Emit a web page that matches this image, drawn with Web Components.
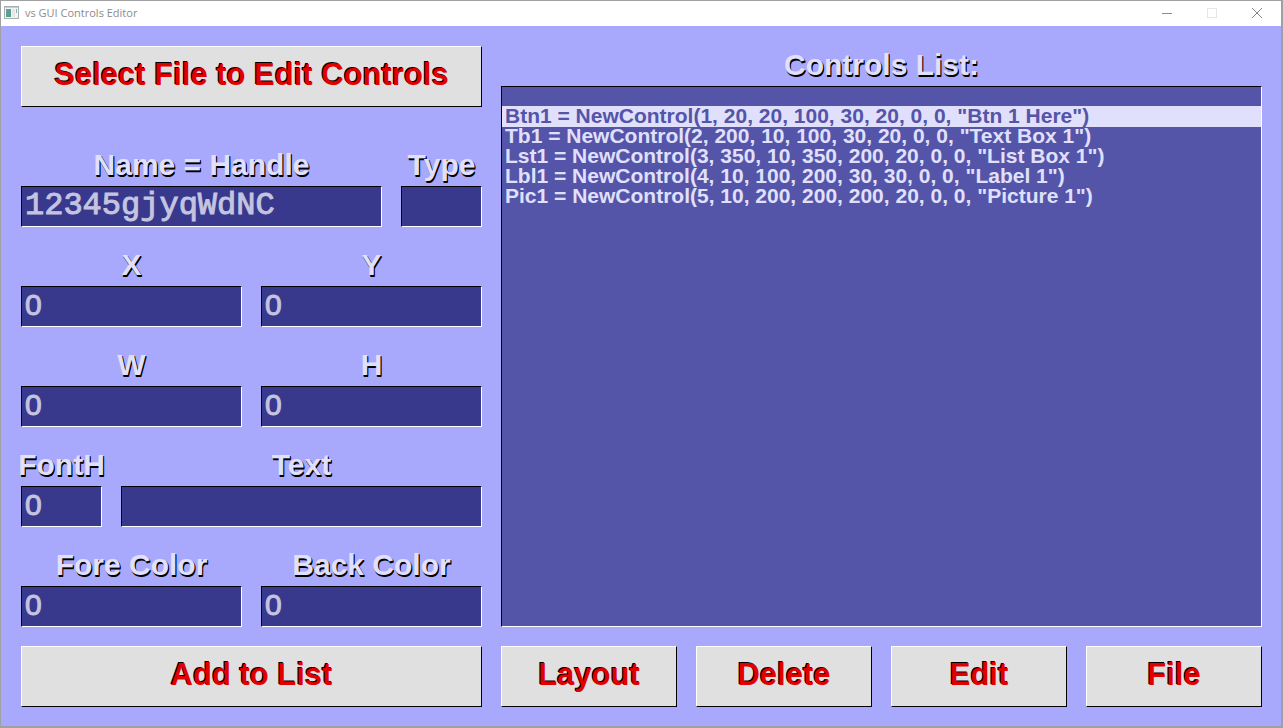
<!DOCTYPE html>
<html lang="en">
<head>
<meta charset="utf-8">
<meta name="viewport" content="width=device-width, initial-scale=1">
<title>vs GUI Controls Editor</title>
<style>
  html, body { margin: 0; }
  body {
    --face: #e0e0e0;
    --back: #a8a8fc;
    --light: #e0e0fc;
    --well: #38388c;
    --list: #5454a8;
    background: #c4c4c8;
    font-family: "Liberation Sans", Arial, sans-serif;
  }
</style>
</head>
<body>
<editor-window caption="vs GUI Controls Editor">
  <editor-column slot="left">
    <bevel-button>Select File to Edit Controls</bevel-button>
    <field-group>
      <field-row columns="361fr 81fr">
        <text-field label="Name = Handle" value="12345gjyqWdNC" pitch="fixed"></text-field>
        <text-field label="Type" value=""></text-field>
      </field-row>
      <field-row columns="1fr 1fr">
        <text-field label="X" value="0"></text-field>
        <text-field label="Y" value="0"></text-field>
      </field-row>
      <field-row columns="1fr 1fr">
        <text-field label="W" value="0"></text-field>
        <text-field label="H" value="0"></text-field>
      </field-row>
      <field-row columns="81fr 361fr">
        <text-field label="FontH" value="0"></text-field>
        <text-field label="Text" value=""></text-field>
      </field-row>
      <field-row columns="1fr 1fr">
        <text-field label="Fore Color" value="0"></text-field>
        <text-field label="Back Color" value="0"></text-field>
      </field-row>
    </field-group>
    <bevel-button>Add to List</bevel-button>
  </editor-column>
  <editor-column slot="right">
    <controls-list label="Controls List:" selected="1"></controls-list>
    <field-row columns="repeat(4, 1fr)">
      <bevel-button>Layout</bevel-button>
      <bevel-button>Delete</bevel-button>
      <bevel-button>Edit</bevel-button>
      <bevel-button>File</bevel-button>
    </field-row>
  </editor-column>
</editor-window>

<script>
const labelStyle = `
  .label {
    display: flex; justify-content: center;
    height: 40px; line-height: 38px;
    font-size: 30px; font-weight: 700; white-space: nowrap;
    color: var(--light);
    text-shadow: 1px 1px 0 #000, 1px 2px 0 #000;
  }`;

class ShadowElement extends HTMLElement {
  connectedCallback() {
    if (this.shadowRoot) return;
    const t = document.createElement('template');
    t.innerHTML = this.view();
    this.attachShadow({ mode: 'open' }).append(t.content.cloneNode(true));
    this.ready();
  }
  ready() {}
}

customElements.define('editor-window', class extends ShadowElement {
  view() { return `
    <style>
      :host { display: flex; flex-direction: column; box-sizing: border-box; min-height: 100vh;
        border: 1px solid #a0a0a4; border-right-width: 2px; border-bottom-width: 2px; background: var(--back); }
      header { display: flex; align-items: flex-start; height: 25px; background: #fff; padding: 0 2px 0 3px; }
      h1 { flex: 1; margin: 0 0 0 6px; font: 400 11px/24px "Open Sans", sans-serif; color: #8c8c8c; }
      header svg { display: block; }
      header > svg { margin-top: 5px; }
      header button { width: 45px; height: 24px; padding: 0; border: 0; background: none; display: grid; place-items: center; }
      main { flex: 1; display: grid; grid-template-columns: 461fr 761fr; gap: 19px; padding: 20px 19px 19px 20px; }
      ::slotted(*) { min-width: 0; }
    </style>
    <header>
      <svg width="15" height="13" viewBox="0 0 15 13" aria-hidden="true">
        <defs><linearGradient id="g" x1="0" y1="0" x2="1" y2="1">
          <stop offset="0" stop-color="#6699b8"/><stop offset="1" stop-color="#55a076"/></linearGradient></defs>
        <rect x=".5" y=".5" width="14" height="12" fill="#f2f4f4" stroke="#a9aeb0"/>
        <rect x="1" y="1" width="13" height="1" fill="#c8cccd"/>
        <rect x="2" y="3" width="5" height="8" fill="url(#g)"/>
        <rect x="8" y="3" width="3" height="8" fill="#e3e7e8"/>
        <rect x="12" y="3" width="1" height="4" fill="#86b2c6"/>
      </svg>
      <h1></h1>
      <button type="button" aria-label="Minimize"><svg width="10" height="10"><path d="M0 5.5h10" stroke="#8c8c8c"/></svg></button>
      <button type="button" aria-label="Maximize" disabled><svg width="10" height="10"><rect x=".5" y=".5" width="9" height="9" fill="none" stroke="#e6e6e6"/></svg></button>
      <button type="button" aria-label="Close"><svg width="10" height="10"><path d="M0 0l10 10M10 0L0 10" stroke="#888"/></svg></button>
    </header>
    <main><slot name="left"></slot><slot name="right"></slot></main>`; }
  ready() { this.shadowRoot.querySelector('h1').textContent = this.getAttribute('caption'); }
});

customElements.define('editor-column', class extends ShadowElement {
  view() { return `<style>:host { display: flex; flex-direction: column; justify-content: space-between; gap: 19px; }</style><slot></slot>`; }
});

customElements.define('field-group', class extends ShadowElement {
  view() { return `<style>:host { display: grid; gap: 19px; margin-top: 20px; }</style><slot></slot>`; }
});

customElements.define('field-row', class extends ShadowElement {
  view() { return `<style>:host { display: grid; grid-template-columns: var(--columns); gap: 19px; } ::slotted(*) { min-width: 0; }</style><slot></slot>`; }
  ready() { this.style.setProperty('--columns', this.getAttribute('columns')); }
});

customElements.define('bevel-button', class extends ShadowElement {
  view() { return `
    <style>
      :host { display: block; }
      button { display: block; box-sizing: border-box; width: 100%; height: 61px; padding: 0 0 4px;
        border: 1px solid; border-color: #fff #000 #000 #fff; background: var(--face);
        font: 700 31px/54px "Liberation Sans", Arial, sans-serif; white-space: nowrap;
        color: #e00000; text-shadow: -1px -1px 0 #000; }
    </style>
    <button type="button"><slot></slot></button>`; }
});

customElements.define('text-field', class extends ShadowElement {
  view() { return `
    <style>
      :host { display: block; }
      ${labelStyle}
      input { display: block; box-sizing: border-box; width: 100%; height: 41px; margin: 0; padding: 0 3px 3px;
        border: 1px solid; border-color: #000 #fff #fff #000; border-radius: 0; outline: 0; background: var(--well);
        font: 400 30px "Liberation Sans", Arial, sans-serif; color: #c4c4e0; -webkit-text-stroke: 1px #c4c4e0; }
      :host([pitch="fixed"]) input { font-family: "Liberation Mono", "Courier New", monospace; font-size: 32px; }
    </style>
    <label class="label" for="box"></label>
    <input id="box" type="text" spellcheck="false">`; }
  ready() {
    this.shadowRoot.querySelector('label').textContent = this.getAttribute('label');
    this.shadowRoot.querySelector('input').value = this.getAttribute('value');
  }
});

const rows = [
  '',
  'Btn1 = NewControl(1, 20, 20, 100, 30, 20, 0, 0, "Btn 1 Here")',
  'Tb1 = NewControl(2, 200, 10, 100, 30, 20, 0, 0, "Text Box 1")',
  'Lst1 = NewControl(3, 350, 10, 350, 200, 20, 0, 0, "List Box 1")',
  'Lbl1 = NewControl(4, 10, 100, 200, 30, 30, 0, 0, "Label 1")',
  'Pic1 = NewControl(5, 10, 200, 200, 200, 20, 0, 0, "Picture 1")'
];

customElements.define('controls-list', class extends ShadowElement {
  view() { return `
    <style>
      :host { display: flex; flex-direction: column; flex: 1; }
      ${labelStyle}
      ul { flex: 1; margin: 0; padding: 0; list-style: none; outline: 0;
        border: 1px solid; border-color: #000 #fff #fff #000; background: var(--list);
        font: 700 21px/20px "Liberation Sans", Arial, sans-serif; color: var(--light); white-space: nowrap; }
      li { height: 20px; padding: 0 3px; }
      li:first-child { height: 19px; }
      li[aria-selected="true"] { background: var(--light); color: var(--list); box-shadow: 0 1px 0 var(--light); }
    </style>
    <div class="label" id="title"></div>
    <ul role="listbox" tabindex="0" aria-labelledby="title"></ul>`; }
  ready() {
    const list = this.shadowRoot.querySelector('ul');
    const selected = Number(this.getAttribute('selected'));
    this.shadowRoot.querySelector('.label').textContent = this.getAttribute('label');
    rows.forEach((text, i) => {
      const li = document.createElement('li');
      li.setAttribute('role', 'option');
      li.setAttribute('aria-selected', String(i === selected));
      li.textContent = text;
      list.append(li);
    });
    list.addEventListener('click', e => {
      const hit = e.target.closest('li');
      if (hit) for (const li of list.children) li.setAttribute('aria-selected', String(li === hit));
    });
  }
});
</script>
</body>
</html>
